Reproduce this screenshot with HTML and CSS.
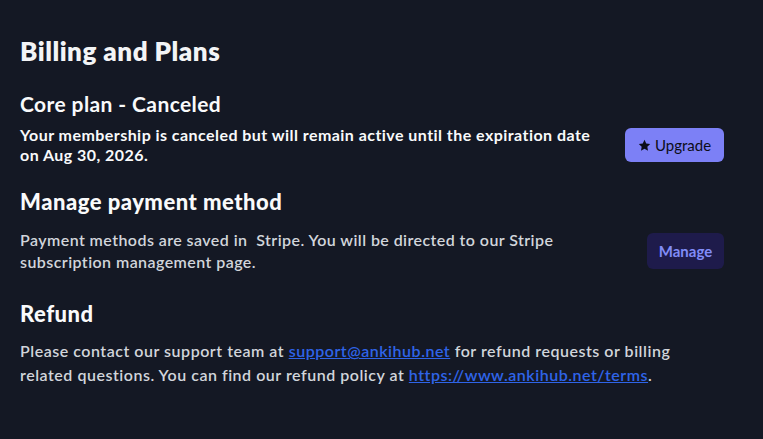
FILE: index.html
```html
<!DOCTYPE html>
<html>
<head>
<meta charset="utf-8">
<link rel="stylesheet" href="styles.css">
</head>
<body>
<main class="page">
  <h1 class="title">Billing and Plans</h1>

  <section class="section section-plan">
    <h2 class="heading heading-plan">Core plan - Canceled</h2>
    <div class="row">
      <p class="text strong">Your membership is canceled but will remain active until the expiration date on Aug 30, 2026.</p>
      <button class="btn btn-primary">
        <svg class="star" viewBox="0 0 24 24" width="13" height="13"><path d="M12 1.5l3.2 6.7 7.3 1-5.3 5.1 1.3 7.3L12 18.1l-6.5 3.5 1.3-7.3L1.5 9.2l7.3-1z" fill="currentColor"/></svg>
        <span>Upgrade</span>
      </button>
    </div>
  </section>

  <section class="section section-pay">
    <h2 class="heading">Manage payment method</h2>
    <div class="row">
      <p class="text muted lh22">Payment methods are saved in&nbsp; Stripe. You will be directed to our Stripe subscription management page.</p>
      <button class="btn btn-soft">Manage</button>
    </div>
  </section>

  <section class="section">
    <h2 class="heading heading-refund">Refund</h2>
    <p class="text muted lh24 wide">Please contact our support team at <a href="#" class="link">support@ankihub.net</a> for refund requests or billing related questions. You can find our refund policy at <a href="#" class="link">https://www.ankihub.net/terms</a>.</p>
  </section>
</main>
</body>
</html>
```

FILE: styles.css
```css
html, body {
  margin: 0;
  padding: 0;
  background: #141824;
}
body {
  font-family: Lato, "Noto Sans", sans-serif;
  color: #f3f4f6;
}
.page {
  padding: 35px 39px 20px 20px;
}
.title {
  margin: 0 0 23px;
  font-size: 26px;
  line-height: 32px;
  font-weight: 800;
  letter-spacing: 0.5px;
  color: #f3f4f6;
}
.section-plan {
  margin-bottom: 23px;
}
.section-pay {
  margin-bottom: 27px;
}
.heading {
  margin: 0 0 13px;
  font-size: 22px;
  line-height: 28px;
  font-weight: 900;
  letter-spacing: 0.5px;
  color: #f9fafb;
}
.heading-plan {
  margin-bottom: 7px;
  font-weight: 700;
  font-size: 21px;
  letter-spacing: 0.4px;
}
.heading-refund {
  margin-bottom: 11px;
}
.row {
  display: flex;
  align-items: center;
  justify-content: space-between;
  gap: 20px;
}
.text {
  margin: 0;
  font-size: 16px;
  line-height: 20px;
  max-width: 580px;
}
.strong {
  color: #f9fafb;
  font-weight: 700;
  letter-spacing: 0.45px;
}
.muted {
  color: #d1d5db;
  font-weight: 600;
  letter-spacing: 0.43px;
}
.lh22 {
  line-height: 22px;
}
.lh24 {
  line-height: 24px;
}
.wide {
  max-width: none;
  letter-spacing: 0.52px;
}
.btn {
  border: none;
  border-radius: 6px;
  font-family: inherit;
  font-size: 15px;
  padding: 0 12px;
  display: inline-flex;
  align-items: center;
  flex-shrink: 0;
}
.btn-primary {
  height: 34px;
  width: 99px;
  gap: 4px;
  justify-content: center;
  background: #7c80f6;
  color: #0c0d18;
  font-weight: 400;
}
.btn-soft {
  height: 36px;
  width: 77px;
  justify-content: center;
  background: #1e1b4b;
  color: #818cf8;
  font-weight: 700;
}
.star {
  display: block;
}
.link {
  color: #2f64e8;
  text-decoration: underline;
}
```
